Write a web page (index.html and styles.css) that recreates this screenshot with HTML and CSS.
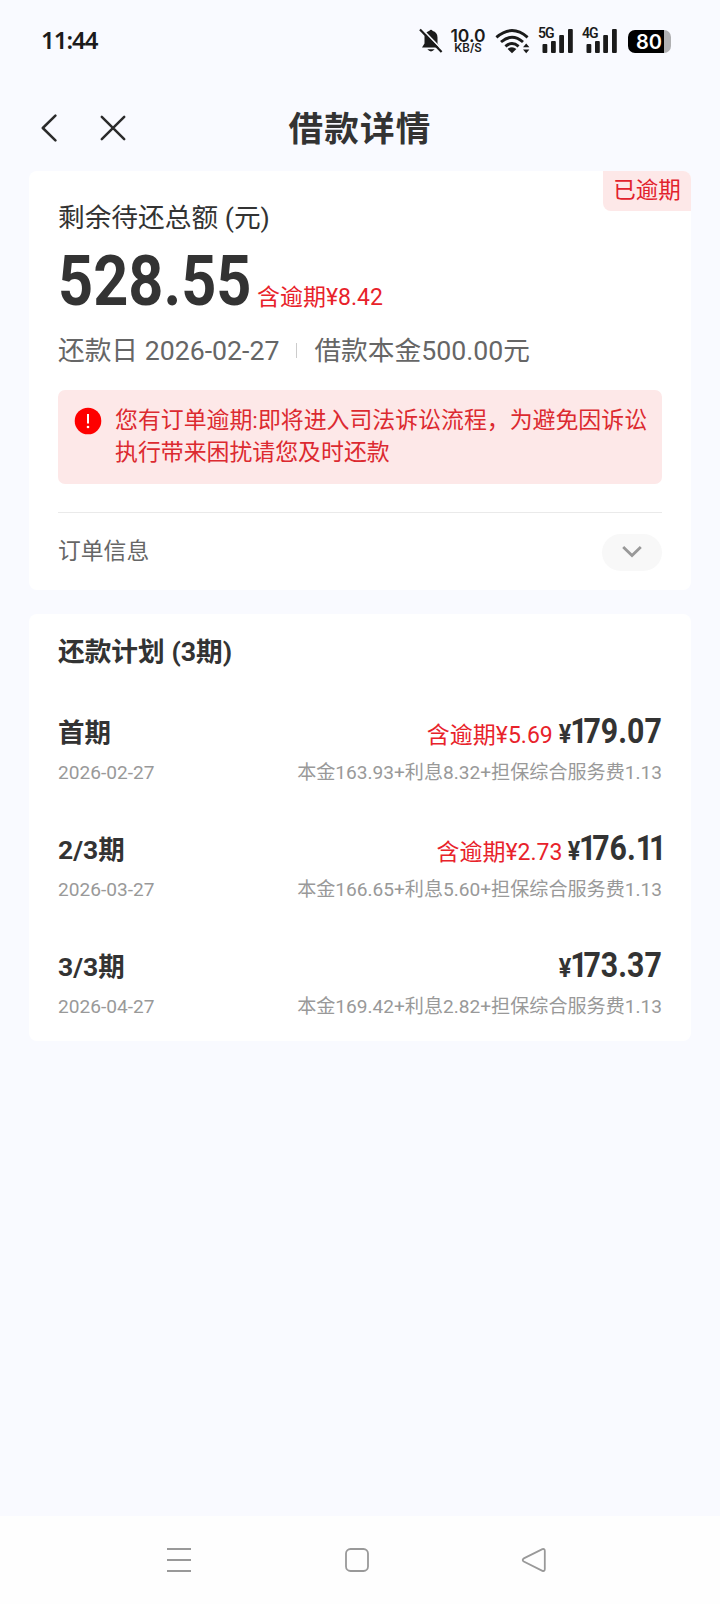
FILE: index.html
```html
<!DOCTYPE html>
<html lang="zh-CN">

<head>
  <meta charset="UTF-8">
  <meta name="viewport" content="width=device-width, initial-scale=1">
  <title>借款详情</title>
  <link rel="stylesheet" href="styles.css">
</head>

<body>
  <div class="status-bar">
    <span class="clock">11:44</span>
    <div class="status-icons">
      <svg class="bell" width="26" height="26" viewBox="0 0 26 26">
        <path d="M4 19.5 L6.5 15.5 V9.5 C6.5 5.5 9 3.6 11.2 3 Q13 0.6 14.8 3 C17.6 3.7 19.5 6 19.5 9.5 V15.5 L22 19.5 Z M9.3 21.3 H16.7 Q13 25.6 9.3 21.3 Z" fill="#1b1b1b"/>
        <path d="M3.6 0.6 L25 22.6" stroke="#fafbff" stroke-width="1.6"/>
        <path d="M2 1.6 L23.6 24" stroke="#1b1b1b" stroke-width="2.2"/>
      </svg>
      <div class="net-speed"><b>10.0</b><small>KB/S</small></div>
      <svg class="wifi" width="36" height="26" viewBox="0 0 36 26">
        <g fill="none" stroke="#1b1b1b" stroke-width="2.9">
          <path d="M1.4 9.4 Q17 -4.2 32.6 9.4"/>
          <path d="M6 14 Q17 4.4 28 14"/>
          <path d="M10.4 18.4 Q17 12.8 23.6 18.4"/>
        </g>
        <path d="M12.6 21 Q17 17.4 21.4 21 L17 25.2 Z" fill="#1b1b1b"/>
        <path d="M28 19.2 L31.2 15.4 L34.4 19.2 Z M28 21.4 L31.2 25.2 L34.4 21.4 Z" fill="#1b1b1b"/>
      </svg>
      <div class="signal">
        <span>5G</span>
        <svg width="36" height="26" viewBox="0 0 36 26" fill="#1b1b1b">
          <rect x="4.5" y="16" width="4.8" height="9" rx="1"/><rect x="13" y="13" width="4.8" height="12" rx="1"/>
          <rect x="21.2" y="7" width="4.8" height="18" rx="1"/><rect x="30" y="1" width="4.8" height="24" rx="1"/>
        </svg>
      </div>
      <div class="signal">
        <span>4G</span>
        <svg width="36" height="26" viewBox="0 0 36 26" fill="#1b1b1b">
          <rect x="4.5" y="16" width="4.8" height="9" rx="1"/><rect x="13" y="13" width="4.8" height="12" rx="1"/>
          <rect x="21.2" y="7" width="4.8" height="18" rx="1"/><rect x="30" y="1" width="4.8" height="24" rx="1"/>
        </svg>
      </div>
      <div class="battery"><span>80</span></div>
    </div>
  </div>

  <header class="nav">
    <div class="nav-left">
      <svg width="18" height="28" viewBox="0 0 18 28"><path d="M14.4 1.6 L1.8 14 L14.4 26.4"/></svg>
      <svg width="26" height="26" viewBox="0 0 26 26"><path d="M1.8 1.8 L24.2 24.2 M24.2 1.8 L1.8 24.2"/></svg>
    </div>
    <h1>借款详情</h1>
  </header>

  <section class="card summary">
    <span class="tag">已逾期</span>
    <div class="label">剩余待还总额 (元)</div>
    <div class="total">
      <span class="total-num"><span>528.55</span></span>
      <span class="overdue">含逾期¥8.42</span>
    </div>
    <div class="meta">
      <span>还款日 2026-02-27</span>
      <i></i>
      <span>借款本金500.00元</span>
    </div>
    <div class="alert">
      <svg width="28" height="28" viewBox="0 0 28 28">
        <circle cx="14" cy="14" r="13.3" fill="#fe0000"/>
        <path d="M14 7 V16.5" stroke="#fff" stroke-width="2"/>
        <circle cx="14" cy="20" r="1.3" fill="#fff"/>
      </svg>
      <p>您有订单逾期:即将进入司法诉讼流程，为避免因诉讼<br>执行带来困扰请您及时还款</p>
    </div>
    <div class="order">
      <span>订单信息</span>
      <div class="toggle">
        <svg width="20" height="14" viewBox="0 0 20 14"><path d="M1.2 2 L10 10.6 L18.8 2"/></svg>
      </div>
    </div>
  </section>

  <section class="card plan">
    <h2>还款计划 (3期)</h2>

    <div class="item">
      <div class="row">
        <b class="term">首期</b>
        <div class="price">
          <span class="overdue">含逾期¥5.69</span>
          <span class="yen">¥</span><span class="num"><span class="one">1</span>79.07</span>
        </div>
      </div>
      <div class="row detail">
        <span>2026-02-27</span>
        <span>本金163.93+利息8.32+担保综合服务费1.13</span>
      </div>
    </div>

    <div class="item">
      <div class="row">
        <b class="term">2/3期</b>
        <div class="price">
          <span class="overdue">含逾期¥2.73</span>
          <span class="yen">¥</span><span class="num"><span class="one">1</span>76.<span class="one">11</span></span>
        </div>
      </div>
      <div class="row detail">
        <span>2026-03-27</span>
        <span>本金166.65+利息5.60+担保综合服务费1.13</span>
      </div>
    </div>

    <div class="item">
      <div class="row">
        <b class="term">3/3期</b>
        <div class="price">
          <span class="yen">¥</span><span class="num"><span class="one">1</span>73.37</span>
        </div>
      </div>
      <div class="row detail">
        <span>2026-04-27</span>
        <span>本金169.42+利息2.82+担保综合服务费1.13</span>
      </div>
    </div>
  </section>

  <footer class="sys-nav">
    <svg width="26" height="26" viewBox="0 0 26 26"><path d="M1 2 H25 M1 13 H25 M1 24 H25"/></svg>
    <svg width="26" height="26" viewBox="0 0 26 26"><rect x="2" y="2" width="22" height="22" rx="4.5"/></svg>
    <svg width="26" height="26" viewBox="0 0 26 26"><path d="M2.8 11.4 L21.4 2.2 Q23.8 1.4 23.8 4 V22 Q23.8 24.6 21.4 23.8 L2.8 14.6 Q0.6 13 2.8 11.4 Z"/></svg>
  </footer>
</body>

</html>
```
FILE: styles.css
```css
* {
  box-sizing: border-box;
}

body {
  margin: 0;
  height: 1604px;
  display: flex;
  flex-direction: column;
  background: #f9faff;
  color: #333;
  font-family: Roboto, "Noto Sans CJK SC", sans-serif;
  font-size: 23px;
}

h1, h2, p {
  margin: 0;
}

svg {
  display: block;
  flex: none;
}

/* status bar */
.status-bar {
  height: 82px;
  padding: 0 49px 0 41px;
  display: flex;
  align-items: center;
  justify-content: space-between;
  color: #1b1b1b;
}

.clock {
  font-family: "Noto Sans", sans-serif;
  font-size: 24px;
  font-weight: 600;
  letter-spacing: -1px;
  padding-bottom: 3px;
}

.status-icons {
  display: flex;
  align-items: center;
}

.net-speed {
  width: 36px;
  margin: 0 9px 0 6px;
  text-align: center;
  font-family: Inter, sans-serif;
}

.net-speed b {
  display: block;
  font-size: 17.5px;
  line-height: 15px;
  font-weight: 600;
}

.net-speed small {
  display: block;
  font-size: 11.5px;
  line-height: 11px;
  font-weight: 600;
}

.signal {
  position: relative;
  margin-left: 8px;
}

.wifi {
  margin-right: -1px;
}

.signal span {
  position: absolute;
  left: 0;
  top: 0;
  font-size: 14px;
  line-height: 11px;
  font-weight: 600;
  letter-spacing: -1px;
}

.battery {
  width: 43px;
  height: 23px;
  margin-left: 10px;
  border-radius: 7px;
  background: linear-gradient(90deg, #000 36px, #b0b0b2 36px);
  color: #fff;
  font-family: Inter, sans-serif;
  font-size: 20px;
  line-height: 24px;
  font-weight: 600;
  padding-left: 8px;
}

/* title bar */
.nav {
  height: 89px;
  padding-left: 41px;
  display: flex;
  align-items: center;
  position: relative;
}

.nav-left {
  display: flex;
  align-items: center;
  gap: 41px;
  padding-top: 3px;
}

.nav path {
  fill: none;
  stroke: #2b2b2b;
  stroke-width: 2.5;
  stroke-linecap: round;
  stroke-linejoin: round;
}

.nav h1 {
  position: absolute;
  left: 0;
  right: 0;
  top: 20px;
  text-align: center;
  font-size: 34.6px;
  line-height: 54px;
  letter-spacing: 1.2px;
}

/* cards */
.card {
  position: relative;
  margin: 0 29px 24px;
  padding: 0 29px;
  background: #fff;
  border-radius: 8px;
}

.summary {
  height: 419px;
  padding-top: 27px;
}

.tag {
  position: absolute;
  top: 0;
  right: 0;
  width: 88px;
  height: 40px;
  line-height: 38px;
  text-align: center;
  font-size: 22.5px;
  color: #e2222c;
  background: #fde8e8;
  border-radius: 0 8px 0 8px;
}

.label {
  font-size: 26.7px;
  line-height: 40px;
}

.total {
  display: flex;
  align-items: baseline;
  height: 80px;
  padding-top: 2px;
}

.total-num {
  width: 199px;
  font-size: 70px;
  line-height: 82px;
  font-weight: 700;
}

.total-num span {
  display: inline-block;
  transform: scaleX(0.875);
  transform-origin: 0 0;
}

.overdue {
  color: #e8222a;
  font-size: 23px;
}

.meta {
  display: flex;
  align-items: center;
  height: 61px;
  font-size: 26.7px;
  color: #666;
}

.meta i {
  width: 1px;
  height: 15px;
  margin: 4px 17px 0;
  background: #ccc;
}

.alert {
  display: flex;
  height: 94px;
  margin-top: 11px;
  padding: 15px 0 0 16px;
  gap: 13px;
  background: #fde8e8;
  border-radius: 7px;
  color: #dc2a30;
}

.alert svg {
  margin-top: 2px;
}

.alert p {
  white-space: nowrap;
  font-size: 22.9px;
  line-height: 32px;
}

.order {
  display: flex;
  align-items: center;
  justify-content: space-between;
  margin-top: 28px;
  height: 77px;
  padding-bottom: 4px;
  border-top: 1px solid #eaeaea;
  color: #666;
}

.order span {
  font-size: 22.8px;
}

.toggle {
  display: flex;
  align-items: center;
  justify-content: center;
  width: 60px;
  height: 37px;
  margin-top: 6px;
  border-radius: 19px;
  background: #f8f8f8;
}

.toggle path {
  fill: none;
  stroke: #999;
  stroke-width: 2.8;
}

/* repayment plan */
.plan {
  height: 427px;
  padding-top: 18px;
}

.plan h2 {
  font-size: 26.7px;
  line-height: 40px;
  margin-bottom: 39px;
}

.item {
  height: 117px;
}

.row {
  display: flex;
  align-items: baseline;
  justify-content: space-between;
  height: 46px;
}

.term {
  font-size: 26.5px;
  position: relative;
  top: -1px;
}

.price {
  display: flex;
  align-items: baseline;
}

.yen {
  margin-left: 5px;
  font-size: 26px;
  font-weight: 700;
  transform: scaleX(0.9);
}

.num {
  font-size: 35px;
  line-height: 42px;
  font-weight: 700;
  transform: scaleX(0.865);
  transform-origin: 100% 0;
  margin-left: -15.5px;
}

.one {
  letter-spacing: -4.8px;
}

.detail {
  font-size: 19.1px;
  line-height: 32px;
  height: 32px;
  color: #999;
}

/* system navigation */
.sys-nav {
  height: 88px;
  margin-top: auto;
  padding: 0 173px 0 166px;
  display: flex;
  align-items: center;
  justify-content: space-between;
  background: #fefefe;
}

.sys-nav path,
.sys-nav rect {
  fill: none;
  stroke: #999;
  stroke-width: 1.8;
}
```
